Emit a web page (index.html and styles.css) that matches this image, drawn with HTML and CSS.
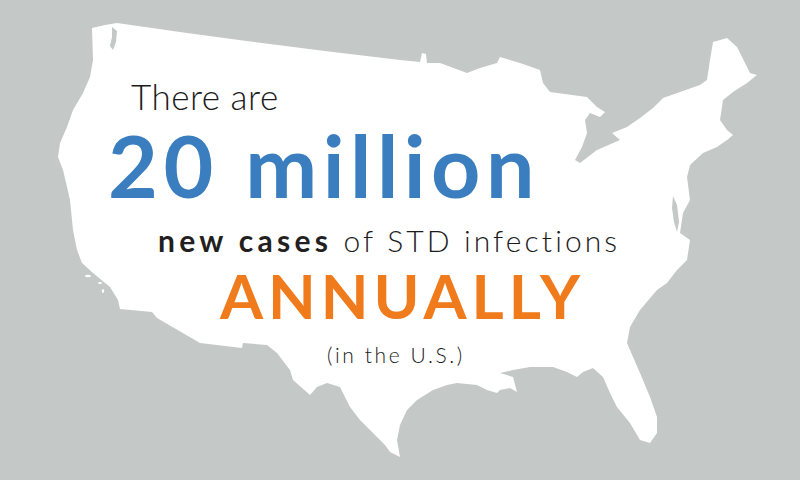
FILE: index.html
```html
<!DOCTYPE html>
<html lang="en">
<head>
<meta charset="utf-8">
<title>20 million new cases of STD infections annually</title>
<link rel="stylesheet" href="styles.css">
</head>
<body>
<div class="poster">
  <svg class="map" viewBox="0 0 800 480" width="800" height="480" aria-hidden="true">
    <path class="land" d="M92,28 L105,25 L117,23 Q260,44 400,60 L420,62 L422,53 L426,54 L427,63 L440,63 L467,73 L480,68 L497,63 L500,57 L520,63 L540,70 L543,83 L550,92 L587,97 L597,107 L605,112 L600,117 L590,113 L585,120 L587,133 L582,147 L575,160 L580,163 L597,150 L620,140 L612,133 L627,127 L640,118 L653,108 L663,98 L700,85 L707,80 L710,60 L713,42 L720,40 L727,38 L737,47 L750,73 L757,75 L747,83 L733,92 L723,100 L720,120 L727,130 L733,135 L727,140 L717,147 L703,153 L690,165 L687,177 L690,200 L683,213 L680,233 L690,240 L687,260 L677,270 L667,283 L657,290 L640,310 L630,327 L627,343 L630,350 L640,373 L650,397 L657,417 L657,433 L650,443 L640,440 L630,423 L617,407 L610,393 L603,377 L593,368 L583,372 L577,377 L567,372 L553,367 L530,367 L513,370 L500,373 L513,377 L517,392 L510,388 L500,390 L497,393 L487,390 L477,385 L457,383 L447,385 L433,390 L417,400 L407,410 L400,425 L397,440 L400,457 L390,452 L385,445 L360,420 L350,407 L340,387 L327,383 L317,387 L310,395 L293,380 L290,370 L277,353 L267,345 L243,343 L242,348 L200,343 L157,318 L152,312 L120,309 L118,300 L110,287 L93,273 L82,263 L77,250 L73,230 L70,200 L67,187 L63,170 L58,157 L60,143 L67,127 L73,110 L83,93 L90,77 L93,60 Z"/>
    <path class="water" d="M112,27 L117,31 L116,42 L113,50 L110,46 L112,37 Z"/>
    <path class="water" d="M673,196 L677,205 L679,222 L677,232 L674,222 L672,208 Z"/>
    <ellipse class="land" cx="88" cy="276" rx="3" ry="1.2"/>
    <ellipse class="land" cx="100" cy="283" rx="2" ry="1"/>
    <ellipse class="land" cx="103" cy="291" rx="1.2" ry="2"/>
  </svg>
  <div class="copy">
    <p class="line intro">There are</p>
    <p class="line figure">20 million</p>
    <p class="line cases"><strong>new cases</strong> of STD infections</p>
    <p class="line annual">ANNUALLY</p>
    <p class="line note">(in the U.S.)</p>
  </div>
</div>
</body>
</html>
```
FILE: styles.css
```css
html, body {
  margin: 0;
  padding: 0;
  background: #c4c8c7;
}

.poster {
  position: relative;
  width: 800px;
  height: 480px;
  overflow: hidden;
  background: #c4c8c7;
  font-family: "Lato", "Liberation Sans", sans-serif;
}

.map {
  position: absolute;
  top: 0;
  left: 0;
  display: block;
}

.land {
  fill: #ffffff;
}

.water {
  fill: #c4c8c7;
}

.copy {
  position: relative;
  display: flex;
  flex-direction: column;
  align-items: flex-start;
  padding-top: 79px;
}

.line {
  margin: 0;
  line-height: 1;
  white-space: nowrap;
}

.intro {
  margin-left: 131px;
  font-size: 35px;
  font-weight: 300;
  color: #1b1b1b;
  letter-spacing: 0.5px;
}

.figure {
  margin-top: 8px;
  margin-left: 108px;
  font-size: 86px;
  font-weight: 700;
  color: #3b7ebf;
  letter-spacing: 5.5px;
}

.cases {
  margin-top: 17px;
  margin-left: 158px;
  font-size: 30px;
  font-weight: 300;
  color: #1b1b1b;
  letter-spacing: 3.1px;
}

.cases strong {
  font-weight: 700;
  color: #231f20;
  letter-spacing: 4.3px;
}

.annual {
  margin-top: 8.5px;
  margin-left: 220px;
  font-size: 62px;
  font-weight: 700;
  color: #f07b1c;
  letter-spacing: 5px;
}

.note {
  margin-top: 18px;
  margin-left: 327px;
  font-size: 21px;
  font-weight: 300;
  color: #1b1b1b;
  letter-spacing: 2.6px;
}
```
